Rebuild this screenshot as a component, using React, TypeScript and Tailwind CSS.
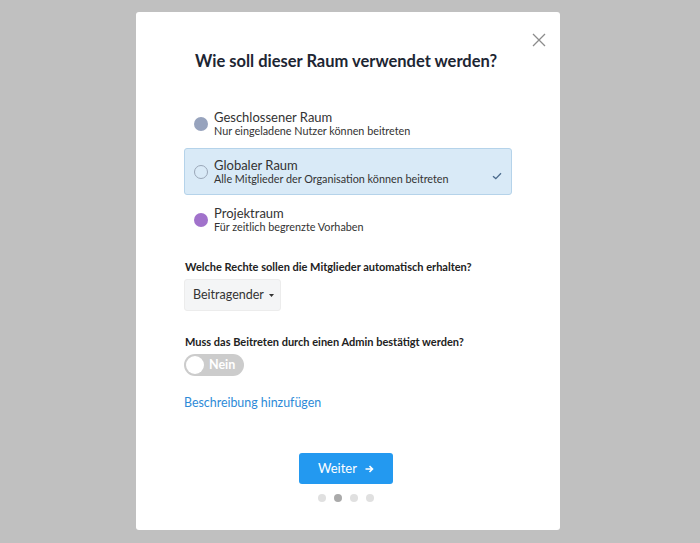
import React from "react";

function Option({
  title,
  subtitle,
  color,
  selected,
}: {
  title: string;
  subtitle: string;
  color?: string;
  selected?: boolean;
}) {
  return (
    <div
      className={
        "flex items-center h-[47px] pl-[9px] pr-[8px] rounded-[3px] border " +
        (selected ? "bg-[#d9eaf7] border-[#b5d3ea]" : "border-transparent")
      }
    >
      <div
        className={
          "w-[14px] h-[14px] rounded-full shrink-0 " +
          (selected ? "border border-[#9aa7b8] bg-transparent" : "")
        }
        style={selected ? undefined : { backgroundColor: color }}
      />
      <div className="ml-[6px] flex-1 flex flex-col">
        <span className="text-[13px] leading-[16px] text-[#333]">{title}</span>
        <span className="text-[10.8px] leading-[14px] text-[#333] mt-[-1px]">{subtitle}</span>
      </div>
      {selected && (
        <svg width="10" height="8" viewBox="0 0 10 8" className="mt-[8px] mr-[1px]">
          <path d="M1 4.2 L3.8 6.6 L9 1.2" stroke="#4a6a8c" strokeWidth="1.3" fill="none" />
        </svg>
      )}
    </div>
  );
}

export default function App() {
  return (
    <div
      className="w-[700px] h-[543px] bg-[#c0c0c0] flex pl-[136px] pt-[12px]"
      style={{ fontFamily: "Lato, 'Noto Sans', sans-serif" }}
    >
      <div className="relative w-[424px] h-[518px] bg-white rounded-[3px] flex flex-col px-[48px]">
        <button className="absolute right-[14px] top-[21px] w-[14px] h-[14px]">
          <svg width="14" height="14" viewBox="0 0 14 14">
            <path d="M1 1 L13 13 M13 1 L1 13" stroke="#8c8c8c" strokeWidth="1.3" />
          </svg>
        </button>
        <h1 className="mt-[38px] pr-[4px] text-center text-[16.5px] font-bold text-[#1d2633] leading-[22px]">
          Wie soll dieser Raum verwendet werden?
        </h1>
        <div className="mt-[28px] flex flex-col gap-[1px]">
          <Option title="Geschlossener Raum" subtitle="Nur eingeladene Nutzer können beitreten" color="#97a3bd" />
          <Option title="Globaler Raum" subtitle="Alle Mitglieder der Organisation können beitreten" selected />
          <Option title="Projektraum" subtitle="Für zeitlich begrenzte Vorhaben" color="#a172cb" />
        </div>
        <div className="mt-[17px] text-[11px] font-bold text-[#222] leading-[14px] pl-[1px]">
          Welche Rechte sollen die Mitglieder automatisch erhalten?
        </div>
        <div className="mt-[5px]">
          <button className="h-[32px] pl-[8px] pr-[6px] bg-[#f4f5f6] border border-[#ececec] rounded-[3px] flex items-center gap-[5px] text-[12.5px] text-[#333]">
            Beitragender
            <svg width="5" height="3" viewBox="0 0 5 3">
              <path d="M0 0 L5 0 L2.5 3 Z" fill="#333" />
            </svg>
          </button>
        </div>
        <div className="mt-[24px] text-[11px] font-bold text-[#222] leading-[14px] pl-[1px]">
          Muss das Beitreten durch einen Admin bestätigt werden?
        </div>
        <div className="mt-[5px]">
          <div className="w-[60px] h-[22px] rounded-full bg-[#cccccc] flex items-center pl-[2px]">
            <div className="w-[18px] h-[18px] rounded-full bg-white" />
            <span className="ml-[5px] text-[12.5px] font-bold text-white">Nein</span>
          </div>
        </div>
        <a className="mt-[19px] text-[12.4px] text-[#2d8ad7] leading-[16px]">Beschreibung hinzufügen</a>
        <div className="mt-[42px] flex justify-center pr-[4px]">
          <button className="w-[94px] h-[31px] bg-[#2399f0] rounded-[3px] text-white text-[13px] flex items-center justify-center gap-[8px]">
            Weiter
            <svg width="9" height="8" viewBox="0 0 9 8">
              <path d="M0.5 4 L7.5 4 M4.5 1 L7.5 4 L4.5 7" stroke="white" strokeWidth="1.6" fill="none" />
            </svg>
          </button>
        </div>
        <div className="mt-[10px] flex justify-center gap-[8px] pr-[4px]">
          <div className="w-[8px] h-[8px] rounded-full bg-[#e0e0e0]" />
          <div className="w-[8px] h-[8px] rounded-full bg-[#aaaaaa]" />
          <div className="w-[8px] h-[8px] rounded-full bg-[#e0e0e0]" />
          <div className="w-[8px] h-[8px] rounded-full bg-[#e0e0e0]" />
        </div>
      </div>
    </div>
  );
}
